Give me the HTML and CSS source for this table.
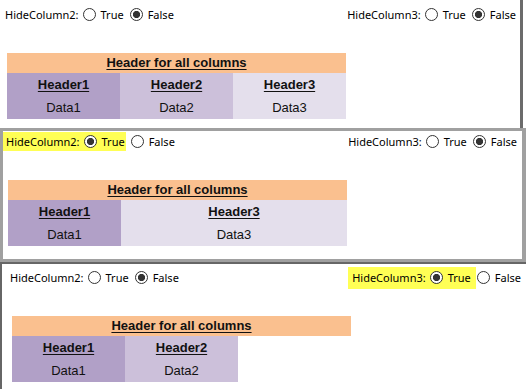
FILE: index.html
```html
<!DOCTYPE html>
<html lang="en">
<head>
<meta charset="utf-8">
<title>Hide columns</title>
<link rel="stylesheet" href="styles.css">
</head>
<body>
<div class="panel panel-1">
  <div class="controls">
    <div class="opt">
      <span class="opt-label">HideColumn2:</span>
      <label class="choice"><input class="radio" type="radio" name="p1c2"><span class="choice-text">True</span></label>
      <label class="choice"><input class="radio" type="radio" name="p1c2" checked><span class="choice-text">False</span></label>
    </div>
    <div class="opt">
      <span class="opt-label">HideColumn3:</span>
      <label class="choice"><input class="radio" type="radio" name="p1c3"><span class="choice-text">True</span></label>
      <label class="choice"><input class="radio" type="radio" name="p1c3" checked><span class="choice-text">False</span></label>
    </div>
  </div>
  <div class="table">
    <div class="table-title"><u>Header for all columns</u></div>
    <div class="col col-1"><div class="cell head"><u>Header1</u></div><div class="cell">Data1</div></div>
    <div class="col col-2"><div class="cell head"><u>Header2</u></div><div class="cell">Data2</div></div>
    <div class="col col-3"><div class="cell head"><u>Header3</u></div><div class="cell">Data3</div></div>
  </div>
</div>

<div class="panel panel-2">
  <div class="controls">
    <div class="opt">
      <span class="hl hl-2">
        <span class="opt-label">HideColumn2:</span>
        <label class="choice"><input class="radio" type="radio" name="p2c2" checked><span class="choice-text">True</span></label>
      </span>
      <label class="choice"><input class="radio" type="radio" name="p2c2"><span class="choice-text">False</span></label>
    </div>
    <div class="opt">
      <span class="opt-label">HideColumn3:</span>
      <label class="choice"><input class="radio" type="radio" name="p2c3"><span class="choice-text">True</span></label>
      <label class="choice"><input class="radio" type="radio" name="p2c3" checked><span class="choice-text">False</span></label>
    </div>
  </div>
  <div class="table">
    <div class="table-title"><u>Header for all columns</u></div>
    <div class="col col-1"><div class="cell head"><u>Header1</u></div><div class="cell">Data1</div></div>
    <div class="col col-3 span-2"><div class="cell head"><u>Header3</u></div><div class="cell">Data3</div></div>
  </div>
</div>

<div class="panel panel-3">
  <div class="controls">
    <div class="opt">
      <span class="opt-label">HideColumn2:</span>
      <label class="choice"><input class="radio" type="radio" name="p3c2"><span class="choice-text">True</span></label>
      <label class="choice"><input class="radio" type="radio" name="p3c2" checked><span class="choice-text">False</span></label>
    </div>
    <div class="opt">
      <span class="hl hl-3">
        <span class="opt-label">HideColumn3:</span>
        <label class="choice"><input class="radio" type="radio" name="p3c3" checked><span class="choice-text">True</span></label>
      </span>
      <label class="choice"><input class="radio" type="radio" name="p3c3"><span class="choice-text">False</span></label>
    </div>
  </div>
  <div class="table">
    <div class="table-title"><u>Header for all columns</u></div>
    <div class="col col-1"><div class="cell head"><u>Header1</u></div><div class="cell">Data1</div></div>
    <div class="col col-2"><div class="cell head"><u>Header2</u></div><div class="cell">Data2</div></div>
  </div>
</div>
</body>
</html>
```

FILE: styles.css
```css
* { box-sizing: border-box; }

html, body {
  margin: 0;
  padding: 0;
  background: #ffffff;
  overflow: hidden;
}

body {
  width: 526px;
  height: 389px;
  font-family: "Noto Sans", "Open Sans", sans-serif;
  font-size: 11px;
  color: #000;
}

.panel {
  background: #fff;
}

.panel-1 {
  width: 523px;
  height: 128px;
  border-right: 3px solid #6b6b6b;
  padding: 5px 4px 0 5px;
}

.panel-2 {
  width: 526px;
  height: 134px;
  border: 3px solid #a0a0a0;
  border-right-width: 4px;
  padding: 1px 5px 0 3px;
}

.panel-3 {
  width: 526px;
  height: 127px;
  border-left: 2px solid #666666;
  border-top: 2px solid #666666;
  padding: 4px 5px 0 8px;
}

.controls {
  display: flex;
  justify-content: space-between;
  align-items: center;
  height: 19px;
}

.opt {
  display: flex;
  align-items: center;
  height: 19px;
  white-space: nowrap;
}

.opt-label {
  display: inline-block;
}

.choice {
  display: inline-flex;
  align-items: center;
  margin-left: 6px;
}

.opt-label + .choice {
  margin-left: 4px;
}

.choice-text {
  margin-left: 5px;
}

.radio {
  -webkit-appearance: none;
  appearance: none;
  width: 13px;
  height: 13px;
  margin: 0;
  border: 1px solid #333;
  border-radius: 50%;
  background: #fff;
  flex: none;
}

.radio:checked {
  background: radial-gradient(circle, #333 0 3.3px, #fff 3.9px);
}

.hl {
  display: inline-flex;
  align-items: center;
  align-self: stretch;
  background: #ffff55;
}

.hl-2 {
  margin-left: -3px;
  padding: 0 1px 0 3px;
}

.hl-2 + .choice {
  margin-left: 5px;
}

.hl-3 {
  margin: -1px 0 -2px -4px;
  padding: 1px 5px 2px 4px;
}

.hl-3 + .choice {
  margin-left: 1px;
}

.table {
  display: grid;
  grid-template-columns: repeat(3, 113px);
  margin-top: 29px;
  margin-left: 2px;
  width: 339px;
  font-family: "Liberation Sans", Arial, sans-serif;
  font-size: 13px;
  color: #111;
}

.table-title {
  grid-column: 1 / -1;
  height: 20px;
  line-height: 19px;
  text-align: center;
  font-weight: bold;
  background: #fac08f;
}

.col {
  display: flex;
  flex-direction: column;
}

.col-1 { background: #b1a0c7; }
.col-2 { background: #ccc0da; }
.col-3 { background: #e4dfec; }

.span-2 { grid-column: span 2; }

.cell {
  height: 23px;
  line-height: 23px;
  text-align: center;
}

.cell.head {
  font-weight: bold;
}

u {
  text-decoration: underline;
  text-underline-offset: 2px;
}
```
